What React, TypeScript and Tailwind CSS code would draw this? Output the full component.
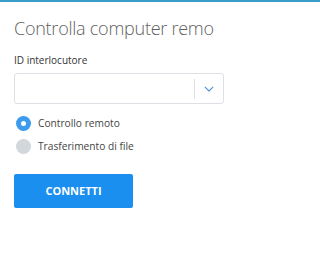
export default function App() {
  return (
    <div className="h-[272px] w-[320px] bg-white font-['Open_Sans',sans-serif]">
      <div className="h-[2px] bg-[#3a9cc8]" />
      <div className="px-[14px] pt-[13px]">
        <h1 className="text-[18px] font-light leading-[26px] tracking-[-0.25px] text-[#5f5f5f]">
          Controlla computer remo
        </h1>

        <label className="mt-[12px] block text-[10px] leading-[14px] text-[#333]">ID interlocutore</label>

        <div className="mt-[6px] flex h-[31px] w-[210px] items-center rounded-[3px] border border-[#dde1e5] bg-white">
          <input className="h-full min-w-0 flex-1 bg-transparent px-2 text-[12px] outline-none" />
          <div className="h-[20px] w-px bg-[#dde1e5]" />
          <div className="flex w-[28px] items-center justify-center">
            <svg width="10" height="6" viewBox="0 0 10 6" fill="none">
              <path d="M0.8 0.8l4.2 4.2L9.2 0.8" stroke="#4a90d9" strokeWidth="1.1" />
            </svg>
          </div>
        </div>

        <div className="mt-[11px] flex flex-col gap-[7px] pl-[2px]">
          <div className="flex items-center gap-[7px]">
            <span className="flex h-[15px] w-[15px] items-center justify-center rounded-full bg-[#3d9bed]">
              <span className="h-[5px] w-[5px] rounded-full bg-white" />
            </span>
            <span className="text-[10.2px] leading-[16px] text-[#444]">Controllo remoto</span>
          </div>
          <div className="flex items-center gap-[7px]">
            <span className="h-[15px] w-[15px] rounded-full bg-[#d2d7dc]" />
            <span className="text-[10.2px] leading-[16px] text-[#444]">Trasferimento di file</span>
          </div>
        </div>

        <button className="mt-[20px] flex h-[34px] w-[119px] items-center justify-center rounded-[2px] bg-[#1a8ff0] text-[11px] font-bold text-white">
          CONNETTI
        </button>
      </div>
    </div>
  );
}
